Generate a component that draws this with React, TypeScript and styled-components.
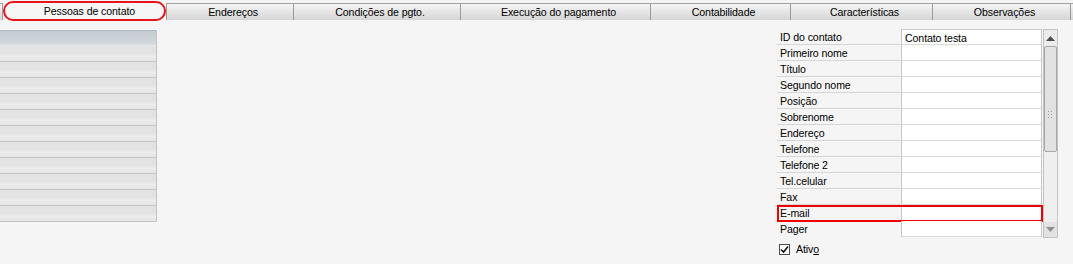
import styled, { createGlobalStyle } from "styled-components";

const GlobalStyle = createGlobalStyle`
  html, body {
    margin: 0;
    padding: 0;
    background: #f5f5f5;
    font-family: "Liberation Sans", Arial, sans-serif;
    font-size: 10.6px;
    letter-spacing: -0.1px;
    color: #000;
  }
`;

const Page = styled.div`
  width: 1073px;
  height: 264px;
  overflow: hidden;
`;

const TabStrip = styled.div`
  display: flex;
  align-items: flex-start;
  height: 22px;
  padding-top: 1px;
  box-sizing: border-box;
`;

const TabFiller = styled.div<{ $width?: number }>`
  flex: ${(p) => (p.$width ? `0 0 ${p.$width}px` : "1 1 auto")};
  min-width: 0;
  height: 17px;
  margin-top: 2px;
  box-sizing: border-box;
  background: linear-gradient(#f6f6f6, #e6e6e6 45%, #d6d6d6);
  border-top: 1px solid #a2a2a2;
  border-left: ${(p) => (p.$width ? "none" : "1px solid #9a9a9a")};
  border-right: ${(p) => (p.$width ? "1px solid #9a9a9a" : "none")};
`;

const Tab = styled.div<{ $width: number; $active?: boolean }>`
  flex: 0 0 ${(p) => p.$width}px;
  box-sizing: border-box;
  display: flex;
  align-items: center;
  justify-content: center;
  padding-left: 6px;
  white-space: nowrap;
  ${(p) =>
    p.$active
      ? `
    height: 20px;
    background: #f6f6f6;
    border: 2px solid #e8141c;
    border-radius: 10px;
    padding-left: 10px;
  `
      : `
    height: 17px;
    margin-top: 2px;
    background: linear-gradient(#f6f6f6, #e6e6e6 45%, #d6d6d6);
    border-top: 1px solid #a2a2a2;
    border-left: 1px solid #9a9a9a;
  `}
`;

const Main = styled.div`
  display: flex;
  justify-content: space-between;
  align-items: flex-start;
  margin-top: 7px;
`;

const Grid = styled.div`
  width: 157px;
  margin-top: 1px;
  border-right: 1px solid #c4c4c4;
  box-sizing: border-box;
`;

const GridHeader = styled.div`
  height: 16px;
  box-sizing: border-box;
  background: linear-gradient(#c3cbd2, #ccd3d9 60%, #d6dce0);
  border-top: 1px solid #b4bcc3;
  border-bottom: 1px solid #e6eaec;
`;

const GridRow = styled.div`
  height: 16px;
  box-sizing: border-box;
  border-bottom: 1px solid #c6c6c6;
  background: linear-gradient(#e3e3e3, #e3e3e3 50%, #ececec 70%, #e5e5e5);
`;

const Form = styled.div`
  width: 281px;
  margin-right: 15px;
`;

const FieldArea = styled.div`
  display: flex;
  gap: 1px;
`;

const FieldList = styled.div`
  width: 265px;
`;

const FieldRow = styled.div<{ $highlight?: boolean }>`
  position: relative;
  display: flex;
  height: 16px;
  ${(p) =>
    p.$highlight &&
    `
    &::after {
      content: "";
      position: absolute;
      left: 0;
      top: 0;
      right: -1px;
      bottom: -1px;
      border: 2px solid #ee0000;
    }
  `}
`;

const Label = styled.div<{ $last?: boolean }>`
  width: 124px;
  box-sizing: border-box;
  padding: 1px 0 0 3px;
  line-height: 15px;
  border-bottom: 1px solid ${(p) => (p.$last ? "transparent" : "#d6d6d6")};
`;

const Value = styled.div<{ $first?: boolean }>`
  width: 141px;
  box-sizing: border-box;
  background: #fff;
  padding: 1px 0 0 3px;
  line-height: 15px;
  border-left: 1px solid #c8c8c8;
  border-right: 1px solid #c8c8c8;
  border-bottom: 1px solid #dadada;
  ${(p) => p.$first && "border-top: 1px solid #c8c8c8; line-height: 14px;"}
`;

const Scrollbar = styled.div`
  width: 15px;
  height: 209px;
  display: flex;
  flex-direction: column;
  border: 1px solid #c2c2c2;
  box-sizing: border-box;
  background: #efefef;
`;

const ArrowButton = styled.div<{ $down?: boolean }>`
  height: ${(p) => (p.$down ? 15 : 16)}px;
  display: flex;
  align-items: center;
  justify-content: center;
  background: ${(p) => (p.$down ? "#e2e2e2" : "#ececec")};
`;

const Thumb = styled.div`
  height: 106px;
  border: 1px solid #a8a8a8;
  border-radius: 2px;
  background: #e2e2e2;
  display: flex;
  align-items: center;
  justify-content: center;
  padding-top: 30px;
  box-sizing: border-box;
`;

const Track = styled.div`
  flex: 1;
`;

const CheckRow = styled.label`
  display: flex;
  align-items: center;
  gap: 6px;
  margin-top: 5px;
  padding-left: 2px;
`;

const Box = styled.span`
  width: 11px;
  height: 11px;
  box-sizing: border-box;
  border: 1px solid #4a4a4a;
  background: #fff;
  display: flex;
  align-items: center;
  justify-content: center;
`;

const tabs = [
  { label: "Pessoas de contato", width: 163, active: true },
  { label: "Endereços", width: 127 },
  { label: "Condições de pgto.", width: 167 },
  { label: "Execução do pagamento", width: 190 },
  { label: "Contabilidade", width: 140 },
  { label: "Características", width: 142 },
  { label: "Observações", width: 138 },
];

const fields = [
  "ID do contato",
  "Primeiro nome",
  "Título",
  "Segundo nome",
  "Posição",
  "Sobrenome",
  "Endereço",
  "Telefone",
  "Telefone 2",
  "Tel.celular",
  "Fax",
  "E-mail",
  "Pager",
];

export default function App() {
  return (
    <Page>
      <GlobalStyle />
      <TabStrip>
        <TabFiller $width={3} />
        {tabs.map((t) => (
          <Tab key={t.label} $width={t.width} $active={t.active}>
            {t.label}
          </Tab>
        ))}
        <TabFiller />
      </TabStrip>
      <Main>
        <Grid>
          <GridHeader />
          {Array.from({ length: 11 }).map((_, i) => (
            <GridRow key={i} />
          ))}
        </Grid>
        <Form>
          <FieldArea>
            <FieldList>
              {fields.map((f, i) => (
                <FieldRow key={f} $highlight={f === "E-mail"}>
                  <Label $last={i === fields.length - 1}>{f}</Label>
                  <Value $first={i === 0}>{i === 0 ? "Contato testa" : ""}</Value>
                </FieldRow>
              ))}
            </FieldList>
            <Scrollbar>
              <ArrowButton>
                <svg width="9" height="5" viewBox="0 0 9 5">
                  <path d="M0 5 L4.5 0 L9 5 Z" fill="#4e4e4e" />
                </svg>
              </ArrowButton>
              <Thumb>
                <svg width="5" height="7" viewBox="0 0 5 7">
                  <g fill="#9c9c9c">
                    <rect x="0" y="0" width="1" height="1" />
                    <rect x="3" y="0" width="1" height="1" />
                    <rect x="0" y="3" width="1" height="1" />
                    <rect x="3" y="3" width="1" height="1" />
                    <rect x="0" y="6" width="1" height="1" />
                    <rect x="3" y="6" width="1" height="1" />
                  </g>
                </svg>
              </Thumb>
              <Track />
              <ArrowButton $down>
                <svg width="9" height="5" viewBox="0 0 9 5">
                  <path d="M0 0 L9 0 L4.5 5 Z" fill="#8e8e8e" />
                </svg>
              </ArrowButton>
            </Scrollbar>
          </FieldArea>
          <CheckRow>
            <Box>
              <svg width="9" height="9" viewBox="0 0 9 9">
                <path d="M1 4.5 L3.5 7 L8 1.5" stroke="#111" strokeWidth="1.6" fill="none" />
              </svg>
            </Box>
            <span>
              Ativ<u>o</u>
            </span>
          </CheckRow>
        </Form>
      </Main>
    </Page>
  );
}
